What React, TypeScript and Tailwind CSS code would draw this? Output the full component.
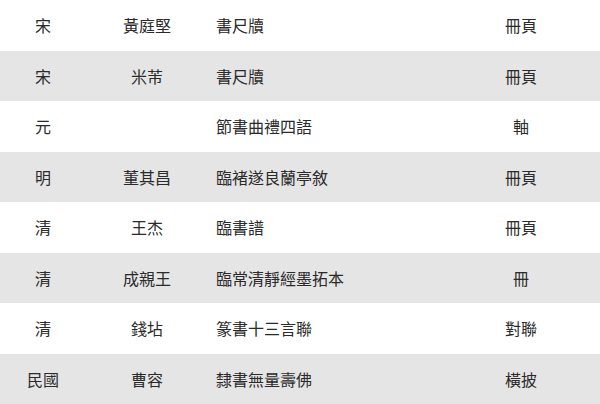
const rows = [
  { era: '宋', author: '黃庭堅', title: '書尺牘', form: '冊頁' },
  { era: '宋', author: '米芾', title: '書尺牘', form: '冊頁' },
  { era: '元', author: '', title: '節書曲禮四語', form: '軸' },
  { era: '明', author: '董其昌', title: '臨褚遂良蘭亭敘', form: '冊頁' },
  { era: '清', author: '王杰', title: '臨書譜', form: '冊頁' },
  { era: '清', author: '成親王', title: '臨常清靜經墨拓本', form: '冊' },
  { era: '清', author: '錢坫', title: '篆書十三言聯', form: '對聯' },
  { era: '民國', author: '曹容', title: '隸書無量壽佛', form: '橫披' },
];

export default function App() {
  return (
    <div className="w-[600px] h-[404px] overflow-hidden bg-white font-['Noto_Sans_CJK_TC','Noto_Sans_CJK_SC',sans-serif] text-[16px] text-[#2a2a2a]">
      {rows.map((row, i) => (
        <div
          key={i}
          className={`grid h-[50.5px] grid-cols-[86px_122px_1fr_158px] items-center ${
            i % 2 === 1 ? 'bg-[#e6e5e6]' : 'bg-white'
          }`}
        >
          <div className="text-center">{row.era}</div>
          <div className="text-center">{row.author}</div>
          <div className="pl-[8px]">{row.title}</div>
          <div className="text-center">{row.form}</div>
        </div>
      ))}
    </div>
  );
}
